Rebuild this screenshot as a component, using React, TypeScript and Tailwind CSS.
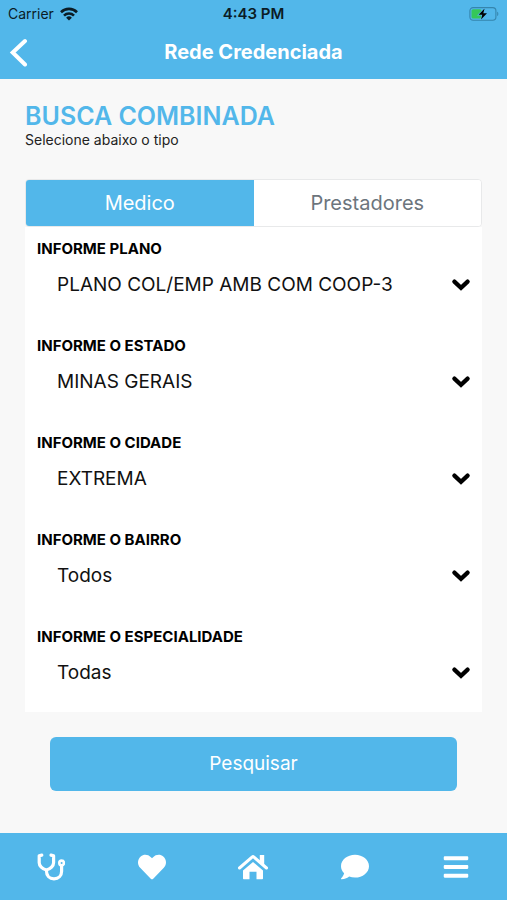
import React, { useState } from "react";
import { FaHeart, FaComment, FaBars } from "react-icons/fa";

interface Field {
  id: string;
  label: string;
  options: string[];
}

const fields: Field[] = [
  { id: "plano", label: "INFORME PLANO", options: ["PLANO COL/EMP AMB COM COOP-3"] },
  { id: "estado", label: "INFORME O ESTADO", options: ["MINAS GERAIS"] },
  { id: "cidade", label: "INFORME O CIDADE", options: ["EXTREMA"] },
  { id: "bairro", label: "INFORME O BAIRRO", options: ["Todos"] },
  { id: "especialidade", label: "INFORME O ESPECIALIDADE", options: ["Todas"] },
];

const tabs = ["Medico", "Prestadores"];

const WifiIcon = () => (
  <svg viewBox="0 0 18 14" className="w-[18px] h-[14px]" fill="none" stroke="currentColor" strokeWidth="2.6">
    <path d="M1 5.2a11.4 11.4 0 0 1 16 0" />
    <path d="M4 8.6a7.1 7.1 0 0 1 10 0" />
    <path d="M9 13.6 6.1 10.7a4.1 4.1 0 0 1 5.8 0Z" fill="currentColor" stroke="none" />
  </svg>
);

const BatteryIcon = () => (
  <svg viewBox="0 0 30 16" className="w-[30px] h-4">
    <rect x="0.9" y="1.6" width="26" height="12.6" rx="3.2" fill="none" stroke="#3585ad" strokeWidth="1.1" />
    <path d="M28.2 5.8c1.5.5 1.5 3.8 0 4.3Z" fill="#3585ad" />
    <rect x="2.5" y="3.2" width="10" height="9.4" rx="1.6" fill="#35c759" />
    <path
      d="M15.6 2.4 9.6 8.7h3.7l-1.3 4.9 6-6.4h-3.7Z"
      fill="#000"
      stroke="#52b7ea"
      strokeWidth="1.4"
      paintOrder="stroke"
    />
  </svg>
);

const ChevronIcon = ({ className }: { className?: string }) => (
  <svg viewBox="0 0 18 12" className={className} fill="none" stroke="currentColor" strokeWidth="4.2">
    <path d="M2.4 2.6 9 8.8l6.6-6.2" strokeLinecap="round" />
  </svg>
);

const StethoscopeIcon = ({ className }: { className?: string }) => (
  <svg viewBox="0 0 28 28" className={className} fill="none" stroke="currentColor" strokeWidth="3.2" strokeLinecap="round">
    <path d="M4.8 2.1 2.2 2.8v7c0 3 3 6.200 7.200 7.200 4.200-1 7.200-4.200 7.200-7.200v-7L14 2.100" strokeLinejoin="round" />
    <path d="M9.400 17.500c0 5.300 3.200 8.300 7.600 8.300 4.600 0 7.600-3 7.600-7.500v-5.400" />
    <circle cx="24.6" cy="9.900" r="2.300" strokeWidth="2.600" />
  </svg>
);

const HomeIcon = ({ className }: { className?: string }) => (
  <svg viewBox="0 0 28 28" className={className} overflow="visible" fill="currentColor">
    <path
      d="M0.500 15 13.300 3.900a1 1 0 0 1 1.400 0L27.500 15"
      fill="none"
      stroke="currentColor"
      strokeWidth="3"
      strokeLinecap="round"
    />
    <path d="M20.800 2h4.400v11l-4.400-4Z" />
    <path d="M14 8.900 24 17.500v7.700c0 .6-.4 1-1 1h-5.500v-7.400h-7v7.400H5c-.6 0-1-.4-1-1v-7.700Z" />
  </svg>
);

const navItems = [
  { title: "Consultas", icon: StethoscopeIcon },
  { title: "Favoritos", icon: FaHeart },
  { title: "Início", icon: HomeIcon },
  { title: "Mensagens", icon: FaComment },
  { title: "Menu", icon: FaBars },
];

const StatusBar = () => (
  <div className="grid grid-cols-3 items-center h-7 px-2 text-sm text-[#0b1c26]">
    <div className="flex items-center gap-1.5">
      <span>Carrier</span>
      <WifiIcon />
    </div>
    <span className="text-center text-[15px] font-semibold">4:43 PM</span>
    <div className="flex justify-end">
      <BatteryIcon />
    </div>
  </div>
);

const SelectField = ({ field }: { field: Field }) => (
  <div className="pt-3 pb-[13px] px-3">
    <label htmlFor={field.id} className="block text-[15px] leading-5 font-bold text-black">
      {field.label}
    </label>
    <div className="relative">
      <select
        id={field.id}
        className="appearance-none w-full h-[52px] pl-5 pr-10 text-[19px] text-[#111] bg-transparent outline-none"
      >
        {field.options.map((option) => (
          <option key={option}>{option}</option>
        ))}
      </select>
      <ChevronIcon className="absolute right-0 inset-y-0 my-auto w-[18px] h-3 text-black pointer-events-none" />
    </div>
  </div>
);

export default function App() {
  const [activeTab, setActiveTab] = useState("Medico");

  return (
    <div className="flex flex-col min-h-screen bg-[#f8f8f8] font-['Inter',sans-serif]">
      {/* Header */}
      <header className="bg-[#52b7ea]">
        <StatusBar />
        <div className="relative flex items-center justify-center h-[51px] pb-1">
          <button aria-label="Voltar" className="absolute left-2 top-0 bottom-1 w-8 flex items-center text-white">
            <svg viewBox="0 0 20 30" className="w-5 h-[30px]" fill="none" stroke="currentColor" strokeWidth="4" strokeLinecap="round">
              <path d="M17 4 4.700 15.500 17 27.500" />
            </svg>
          </button>
          <h1 className="text-xl font-bold text-white">Rede Credenciada</h1>
        </div>
      </header>

      {/* Search form */}
      <main className="flex-1 px-[25px] pt-[23px] pb-10">
        <h2 className="text-[25px] leading-7 font-semibold text-[#52b7ea]">BUSCA COMBINADA</h2>
        <p className="text-sm leading-5 text-[#222]">Selecione abaixo o tipo</p>

        <div className="mt-[29px] flex h-12 rounded-sm border border-[#e8e9ea] bg-white overflow-hidden">
          {tabs.map((tab) => (
            <button
              key={tab}
              onClick={() => setActiveTab(tab)}
              className={`flex-1 text-xl ${activeTab === tab ? "bg-[#52b7ea] text-white" : "bg-white text-[#6c757d]"}`}
            >
              {tab}
            </button>
          ))}
        </div>

        <div className="bg-white">
          {fields.map((field) => (
            <SelectField key={field.id} field={field} />
          ))}
        </div>

        <div className="px-[25px] mt-[25px]">
          <button className="w-full h-[54px] rounded-md bg-[#52b7ea] text-[19px] text-white">Pesquisar</button>
        </div>
      </main>

      {/* Bottom nav */}
      <nav className="grid grid-cols-5 h-[67px] bg-[#52b7ea] text-white">
        {navItems.map((item) => {
          const Icon = item.icon;
          return (
            <a key={item.title} href="#" aria-label={item.title} className="flex items-center justify-center">
              <Icon className="w-7 h-7" />
            </a>
          );
        })}
      </nav>
    </div>
  );
}
